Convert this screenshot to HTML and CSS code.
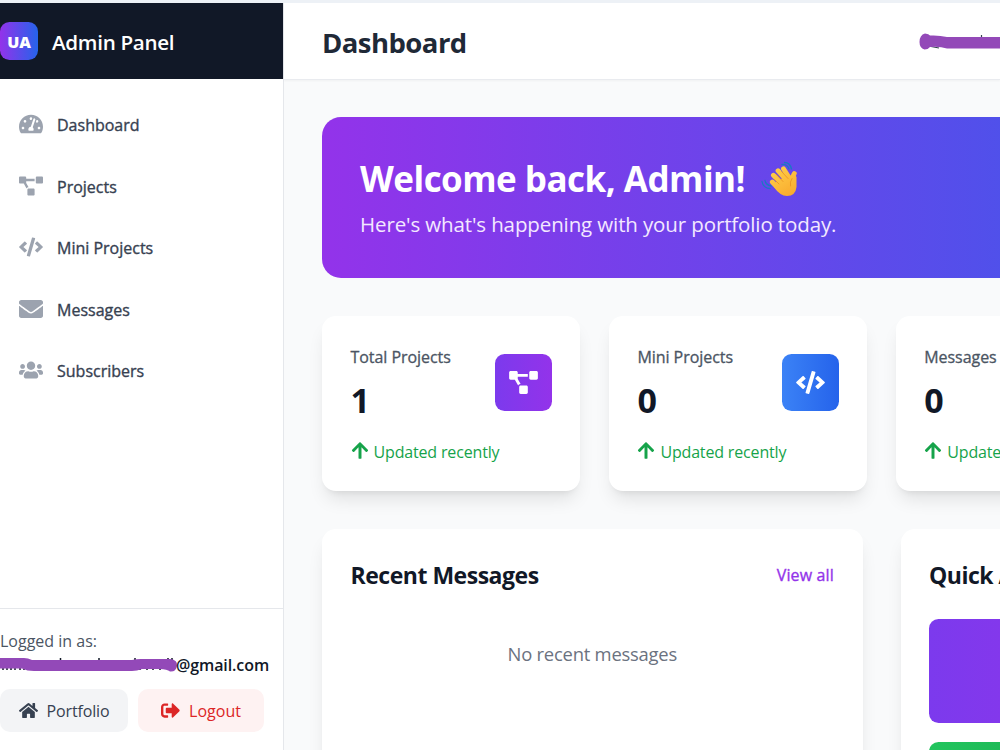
FILE: index.html
```html
<!DOCTYPE html>
<html lang="en">
<head>
<meta charset="utf-8">
<title>Dashboard</title>
<link rel="stylesheet" href="styles.css">
</head>
<body>
<svg class="sprite" aria-hidden="true">
  <symbol id="gauge" viewBox="0 0 576 512"><path d="M288 32C128.94 32 0 160.94 0 320c0 52.8 14.25 102.26 39.06 144.8 5.61 9.62 16.3 15.2 27.44 15.2h443c11.14 0 21.83-5.58 27.44-15.2C561.75 422.26 576 372.8 576 320c0-159.06-128.94-288-288-288zm0 64c14.71 0 26.58 10.13 30.32 23.65-1.11 2.26-2.64 4.23-3.45 6.67l-9.22 27.67c-5.13 3.49-10.97 6.01-17.64 6.01-17.67 0-32-14.33-32-32S270.33 96 288 96zM96 384c-17.67 0-32-14.33-32-32s14.33-32 32-32 32 14.33 32 32-14.33 32-32 32zm48-160c-17.67 0-32-14.33-32-32s14.33-32 32-32 32 14.33 32 32-14.33 32-32 32zm246.77-72.41l-61.33 184C343.13 347.33 352 364.54 352 384c0 11.72-3.38 22.55-8.88 32H232.88c-5.5-9.45-8.88-20.28-8.88-32 0-33.94 26.5-61.43 59.9-63.59l61.34-184.01c4.17-12.56 17.73-19.45 30.36-15.17 12.57 4.19 19.35 17.79 15.17 30.36zm14.66 57.2l15.52-46.55c3.47-1.29 7.13-2.23 11.05-2.23 17.67 0 32 14.33 32 32s-14.33 32-32 32c-11.38-.01-20.89-6.28-26.57-15.22zM480 384c-17.67 0-32-14.33-32-32s14.33-32 32-32 32 14.33 32 32-14.33 32-32 32z"/></symbol>
  <symbol id="diagram" viewBox="0 0 640 512"><path d="M384 320H256c-17.67 0-32 14.33-32 32v128c0 17.67 14.33 32 32 32h128c17.67 0 32-14.33 32-32V352c0-17.67-14.33-32-32-32zM192 32c0-17.67-14.33-32-32-32H32C14.33 0 0 14.33 0 32v128c0 17.67 14.33 32 32 32h95.72l73.16 128.04C211.98 300.98 232.4 288 256 288h.28L192 175.51V128h224V64H192V32zM608 0H480c-17.67 0-32 14.33-32 32v128c0 17.67 14.33 32 32 32h128c17.67 0 32-14.33 32-32V32c0-17.67-14.33-32-32-32z"/></symbol>
  <symbol id="code" viewBox="0 0 640 512"><path d="M278.9 511.5l-61-17.7c-6.4-1.8-10-8.5-8.2-14.9L346.2 8.7c1.8-6.4 8.5-10 14.9-8.2l61 17.7c6.4 1.8 10 8.5 8.2 14.9L293.8 503.3c-1.9 6.4-8.5 10.1-14.9 8.2zm-114-112.2l43.5-46.4c4.6-4.9 4.3-12.7-.8-17.2L117 256l90.6-79.7c5.1-4.5 5.5-12.3.8-17.2l-43.5-46.4c-4.5-4.8-12.1-5.1-17-.5L3.8 247.2c-5.1 4.7-5.1 12.8 0 17.5l144.1 135.1c4.9 4.6 12.5 4.4 17-.5zm327.2.6l144.1-135.1c5.1-4.7 5.1-12.8 0-17.5L492.1 112.1c-4.8-4.5-12.4-4.3-17 .5L431.6 159c-4.6 4.9-4.3 12.7.8 17.2L523 256l-90.6 79.7c-5.1 4.5-5.5 12.3-.8 17.2l43.5 46.4c4.5 4.9 12.1 5.1 17 .6z"/></symbol>
  <symbol id="envelope" viewBox="0 0 512 512"><path d="M502.3 190.8c3.9-3.1 9.7-.2 9.7 4.7V400c0 26.5-21.5 48-48 48H48c-26.5 0-48-21.5-48-48V195.6c0-5 5.7-7.8 9.7-4.7 22.4 17.4 52.1 39.5 154.1 113.6 21.1 15.4 56.7 47.8 92.2 47.6 35.7.3 72-32.8 92.3-47.6 102-74.1 131.6-96.3 154-113.7zM256 320c23.2.4 56.6-29.2 73.4-41.4 132.7-96.3 142.8-104.7 173.4-128.7 5.8-4.5 9.2-11.5 9.2-18.9v-19c0-26.5-21.5-48-48-48H48c-26.5 0-48 21.5-48 48v19c0 7.4 3.4 14.3 9.2 18.9 30.6 23.9 40.7 32.4 173.4 128.7 16.8 12.2 50.2 41.8 73.4 41.4z"/></symbol>
  <symbol id="users" viewBox="0 0 640 512"><path d="M96 224c35.3 0 64-28.7 64-64s-28.7-64-64-64-64 28.7-64 64 28.7 64 64 64zm448 0c35.3 0 64-28.7 64-64s-28.7-64-64-64-64 28.7-64 64 28.7 64 64 64zm32 32h-64c-17.6 0-33.5 7.1-45.1 18.6 40.3 22.1 68.9 62 75.1 109.4h66c17.7 0 32-14.3 32-32v-32c0-35.3-28.7-64-64-64zm-256 0c61.9 0 112-50.1 112-112S381.9 32 320 32 208 82.1 208 144s50.1 112 112 112zm76.8 32h-8.3c-20.8 10-43.9 16-68.5 16s-47.6-6-68.5-16h-8.3C179.6 288 128 339.6 128 403.2V432c0 26.5 21.5 48 48 48h288c26.5 0 48-21.5 48-48v-28.8c0-63.6-51.6-115.2-115.2-115.2zm-223.7-13.4C161.5 263.1 145.6 256 128 256H64c-35.3 0-64 28.7-64 64v32c0 17.7 14.3 32 32 32h65.9c6.3-47.4 34.9-87.3 75.2-109.4z"/></symbol>
  <symbol id="arrow-up" viewBox="0 0 448 512"><path d="M34.9 289.5l-22.2-22.2c-9.4-9.4-9.4-24.6 0-33.9L207 39c9.4-9.4 24.6-9.4 33.9 0l194.3 194.3c9.4 9.4 9.4 24.6 0 33.9L413 289.4c-9.5 9.5-25 9.3-34.3-.4L264 168.6V456c0 13.3-10.7 24-24 24h-32c-13.3 0-24-10.7-24-24V168.6L69.2 289.1c-9.3 9.8-24.8 10-34.3.4z"/></symbol>
  <symbol id="home" viewBox="0 0 576 512"><path d="M280.37 148.26L96 300.11V464a16 16 0 0 0 16 16l112.06-.29a16 16 0 0 0 15.92-16V368a16 16 0 0 1 16-16h64a16 16 0 0 1 16 16v95.64a16 16 0 0 0 16 16.05L464 480a16 16 0 0 0 16-16V300L295.67 148.26a12.19 12.19 0 0 0-15.3 0zM571.6 251.47L488 182.56V44.05a12 12 0 0 0-12-12h-56a12 12 0 0 0-12 12v72.61L318.47 43a48 48 0 0 0-61 0L4.34 251.47a12 12 0 0 0-1.6 16.9l25.5 31A12 12 0 0 0 45.15 301l235.22-193.74a12.19 12.19 0 0 1 15.3 0L530.9 301a12 12 0 0 0 16.9-1.6l25.5-31a12 12 0 0 0-1.7-16.93z"/></symbol>
  <symbol id="sign-out" viewBox="0 0 512 512"><path d="M497 273L329 441c-15 15-41 4.5-41-17v-96H152c-13.3 0-24-10.7-24-24v-96c0-13.3 10.7-24 24-24h136V88c0-21.4 25.9-32 41-17l168 168c9.3 9.4 9.3 24.6 0 34zM192 436v-40c0-6.600-5.400-12-12-12H96c-17.700 0-32-14.300-32-32V160c0-17.700 14.300-32 32-32h84c6.600 0 12-5.400 12-12V76c0-6.600-5.400-12-12-12H96c-53 0-96 43-96 96v192c0 53 43 96 96 96h84c6.600 0 12-5.400 12-12z"/></symbol>
</svg>

<div class="app">
  <aside class="sidebar">
    <div class="brand">
      <div class="brand-mark">UA</div>
      <div class="brand-name">Admin Panel</div>
    </div>
    <nav class="nav">
      <a class="nav-item"><svg class="nav-icon"><use href="#gauge"/></svg><span>Dashboard</span></a>
      <a class="nav-item"><svg class="nav-icon"><use href="#diagram"/></svg><span>Projects</span></a>
      <a class="nav-item"><svg class="nav-icon"><use href="#code"/></svg><span>Mini Projects</span></a>
      <a class="nav-item"><svg class="nav-icon"><use href="#envelope"/></svg><span>Messages</span></a>
      <a class="nav-item"><svg class="nav-icon"><use href="#users"/></svg><span>Subscribers</span></a>
    </nav>
    <div class="account">
      <div class="account-label">Logged in as:</div>
      <div class="account-mail">
        <svg class="mail-mask" viewBox="0 0 178 24">
          <path d="M3 14v3M7 14v3M11 14v3M15 14v3M20 14v3M24 14v3M60.500 5v4M99 5v4M135 5v3M168 5v4M172 5v4M140 14v3M147 14v3M153 14v3M160 14v3" stroke="#111827" stroke-width="1.500"/>
          <path d="M0 5H24Q28 5 32 7H132Q138 5.500 144 6H170Q178 7 177 13Q176 19 170 18.500Q167 16 160 16H142Q137 18 132 18H34Q27 18 22 15.500H0Z" fill="#9349b8"/>
        </svg>
        <span>@gmail.com</span>
      </div>
      <div class="account-actions">
        <a class="btn btn-portfolio"><svg class="btn-icon"><use href="#home"/></svg><span>Portfolio</span></a>
        <a class="btn btn-logout"><svg class="btn-icon"><use href="#sign-out"/></svg><span>Logout</span></a>
      </div>
    </div>
  </aside>

  <div class="main">
    <header class="topbar">
      <h1 class="page-title">Dashboard</h1>
      <svg class="user-mask" viewBox="0 0 81 24">
        <path d="M12 16.500L20 18M62.500 5v4" stroke="#374151" stroke-width="1.200"/>
        <path d="M6 3.500Q10 4 11 5.500Q20 5 28 7H81V18.500H28Q20 16 11 17Q9 19.500 5.500 19.500Q.500 18 .500 12Q.500 5 6 3.500Z" fill="#9349b8"/>
      </svg>
    </header>
    <div class="content">
      <section class="banner">
        <h2 class="banner-title"><span>Welcome back, Admin!</span>
          <svg class="wave" viewBox="0 0 36 36">
            <defs><linearGradient id="skin" gradientUnits="userSpaceOnUse" x1="12" y1="6" x2="30" y2="34"><stop offset="0" stop-color="#ffd04a"/><stop offset="1" stop-color="#f9ab2e"/></linearGradient></defs>
            <path class="wave-motion" d="M23.500 1.500Q29 1.500 30.500 8M21 3.500Q26 3 28 8M1 20.500Q2 27 9 27.500M4 19.500Q5 24 10 25"/>
            <g stroke="url(#skin)" stroke-width="4.800" stroke-linecap="round" fill="none"><path d="M11.300 21L18 28M12.400 14.200L22 24M17 9.700L26 20M22.500 7.800L29 18M33.300 12.500Q31 16 31 22"/></g>
            <path d="M14 22L27 13.500Q30 17 31 18L33.500 13L35.500 16V26Q34.500 35 26 35Q19 35 13 26Z" fill="url(#skin)"/>
            <path class="wave-crease" d="M13.500 18.500L18 23M15.500 13.500L22 20.500M20.500 10.500L27 17.500M31 17.500Q28.500 21 29.500 25"/>
          </svg>
        </h2>
        <p class="banner-text">Here's what's happening with your portfolio today.</p>
      </section>

      <section class="stats">
        <article class="card stat">
          <div class="stat-top">
            <div><div class="stat-label">Total Projects</div><div class="stat-value">1</div></div>
            <div class="stat-badge badge-purple"><svg class="stat-icon"><use href="#diagram"/></svg></div>
          </div>
          <div class="stat-note"><svg class="note-icon"><use href="#arrow-up"/></svg><span>Updated recently</span></div>
        </article>
        <article class="card stat">
          <div class="stat-top">
            <div><div class="stat-label">Mini Projects</div><div class="stat-value">0</div></div>
            <div class="stat-badge badge-blue"><svg class="stat-icon"><use href="#code"/></svg></div>
          </div>
          <div class="stat-note"><svg class="note-icon"><use href="#arrow-up"/></svg><span>Updated recently</span></div>
        </article>
        <article class="card stat">
          <div class="stat-top">
            <div><div class="stat-label">Messages</div><div class="stat-value">0</div></div>
          </div>
          <div class="stat-note"><svg class="note-icon"><use href="#arrow-up"/></svg><span>Updated recently</span></div>
        </article>
      </section>

      <section class="panels">
        <article class="card panel">
          <div class="panel-head"><h3 class="panel-title">Recent Messages</h3><a class="view-all">View all</a></div>
          <p class="empty">No recent messages</p>
        </article>
        <article class="card panel">
          <div class="panel-head"><h3 class="panel-title">Quick Actions</h3></div>
          <div class="quick-grid">
            <div class="quick quick-purple"></div>
            <div class="quick quick-green"></div>
          </div>
        </article>
      </section>
    </div>
  </div>
</div>
</body>
</html>
```
FILE: styles.css
```css
* { box-sizing: border-box; }
html { overflow: hidden; }
body {
  margin: 0;
  width: 1000px;
  height: 750px;
  overflow: hidden;
  border-top: 3px solid #edf1f6;
  background: #f9fafb;
  font-family: "Open Sans", "Noto Sans", sans-serif;
  color: #111827;
}
h1, h2, h3, p { margin: 0; }
svg { fill: currentColor; flex: none; }
.sprite { display: none; }
.app { display: flex; height: 747px; width: 1000px; overflow: hidden; }

.sidebar {
  width: 284px;
  flex: none;
  display: flex;
  flex-direction: column;
  background: #fff;
  border-right: 1px solid #e5e7eb;
}
.brand {
  height: 76px;
  flex: none;
  display: flex;
  align-items: center;
  gap: 14px;
  background: #111827;
  color: #fff;
}
.brand-mark {
  width: 38px;
  height: 38px;
  border-radius: 9.5px;
  background: linear-gradient(to right, #9333ea, #2563eb);
  display: flex;
  align-items: center;
  justify-content: center;
  padding-top: 2px;
  font-size: 16px;
  font-weight: 800;
  letter-spacing: -.2px;
}
.brand-name { padding-top: 2px; font-size: 20.6px; font-weight: 600; letter-spacing: -.3px; }
.nav {
  flex: 1;
  display: flex;
  flex-direction: column;
  gap: 9.5px;
  padding-top: 20px;
}
.nav-item {
  height: 52px;
  display: flex;
  align-items: center;
  gap: 14px;
  padding-left: 19px;
  color: #374151;
  font-size: 16px;
  -webkit-text-stroke: .35px currentColor;
}
.nav-icon { width: 24px; height: 24px; margin-bottom: 2px; color: #9ca3af; }
.account { height: 142px; flex: none; border-top: 1px solid #e5e7eb; padding-top: 20px; }
.account-label { font-size: 16px; line-height: 24px; color: #4b5563; }
.account-mail {
  display: flex;
  align-items: center;
  height: 24px;
  line-height: 22px;
  font-size: 16px;
  font-weight: 600;
  letter-spacing: -.1px;
}
.mail-mask { width: 178px; height: 24px; margin-right: -2px; }
.account-actions { display: flex; gap: 10px; margin-top: 12px; }
.btn {
  height: 43px;
  display: flex;
  align-items: center;
  justify-content: center;
  gap: 9px;
  border-radius: 10px;
  font-size: 16px;
  padding-top: 1px;
}
.btn-portfolio { width: 128px; background: #f3f4f6; color: #374151; letter-spacing: -.15px; }
.btn-logout { width: 126px; background: #fef2f2; color: #dc2626; }
.btn-icon { width: 19px; height: 19px; margin-bottom: 2px; }

.main { flex: 1; min-width: 0; display: flex; flex-direction: column; }
.topbar {
  height: 77px;
  flex: none;
  display: flex;
  align-items: center;
  justify-content: space-between;
  padding: 2px 0 0 38px;
  background: #fff;
  border-bottom: 1px solid #e9ebef;
  box-shadow: 0 1px 2px rgba(0, 0, 0, .04);
}
.page-title { padding-top: 2px; font-size: 27.5px; line-height: 36px; font-weight: 700; letter-spacing: -.55px; color: #1f2937; }
.user-mask { width: 81px; height: 24px; }
.content { width: 1195px; padding: 37px 38px; display: flex; flex-direction: column; gap: 38px; }

.banner {
  height: 161px;
  padding: 38px;
  border-radius: 19px;
  color: #fff;
  background: linear-gradient(to right, #9333ea, #2563eb);
}
.banner-title {
  display: flex;
  align-items: center;
  gap: 16px;
  font-size: 35px;
  line-height: 48px;
  font-weight: 700;
  letter-spacing: -.52px;
}
.wave { width: 36px; height: 36px; }
.wave-motion { fill: none; stroke: #1b78c4; stroke-width: 1.3; stroke-linecap: round; }
.wave-crease { fill: none; stroke: #e68a1d; stroke-width: .7; stroke-linecap: round; }
.banner-text { font-size: 20.5px; line-height: 34px; margin-top: 4px; letter-spacing: -.12px; color: #f3e8ff; }

.card {
  background: #fff;
  border-radius: 14px;
  box-shadow: 0 12px 18px -4px rgba(0, 0, 0, .1), 0 5px 7px -5px rgba(0, 0, 0, .1);
}
.stats { display: grid; grid-template-columns: repeat(4, 1fr); gap: 28.5px; }
.stat { height: 175px; padding: 29.5px 28.5px 28px; }
.stat-top { display: flex; justify-content: space-between; align-items: center; height: 73px; }
.stat-label {
  padding-top: 2px;
  font-size: 16px;
  line-height: 24px;
  letter-spacing: -.05px;
  -webkit-text-stroke: .3px currentColor;
  color: #4b5563;
}
.stat-value { font-size: 34px; line-height: 44px; font-weight: 700; margin-top: 9px; }
.stat-badge {
  width: 57px;
  height: 57px;
  border-radius: 9.5px;
  display: flex;
  align-items: center;
  justify-content: center;
  color: #fff;
}
.badge-purple { background: linear-gradient(to right, #7c3aed, #9333ea); }
.badge-blue { background: linear-gradient(to right, #3b82f6, #2563eb); }
.stat-icon { width: 29px; height: 23px; }
.stat-note {
  display: flex;
  align-items: center;
  gap: 5px;
  height: 24px;
  margin-top: 21px;
  color: #16a34a;
  font-size: 16px;
  letter-spacing: -.16px;
}
.note-icon { width: 18px; height: 19px; margin-bottom: 2px; }

.panels { display: grid; grid-template-columns: repeat(2, 1fr); gap: 38px; }
.panel { height: 330px; padding: 28.5px; }
.panel-head { display: flex; align-items: center; justify-content: space-between; height: 34px; }
.panel-title { font-size: 23px; font-weight: 700; letter-spacing: -.48px; }
.view-all { font-size: 16px; letter-spacing: .15px; -webkit-text-stroke: .35px currentColor; color: #9333ea; }
.empty { margin-top: 48px; text-align: center; font-size: 18.4px; line-height: 27px; letter-spacing: -.22px; color: #6b7280; }
.quick-grid { width: 232px; display: grid; gap: 19px; margin-top: 27.5px; }
.quick { height: 104px; border-radius: 9.5px; }
.quick-purple { background: linear-gradient(to right, #7c3aed, #9333ea); }
.quick-green { background: linear-gradient(to right, #22c55e, #16a34a); }
```
